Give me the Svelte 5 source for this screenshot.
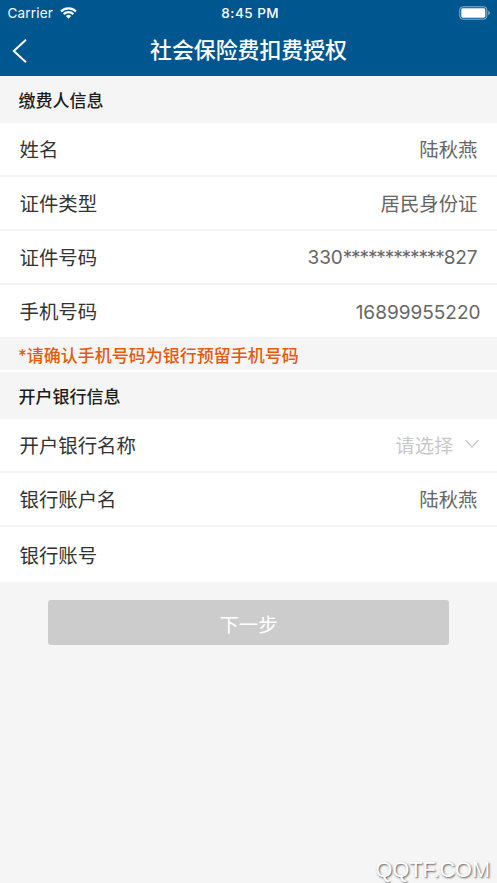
<script>
  const payer = [
    { label: '姓名', value: '陆秋燕' },
    { label: '证件类型', value: '居民身份证' },
  ];

  const idNumber = { head: '330', mask: '*'.repeat(12), tail: '827' };
</script>

<div class="screen">
  <header class="header">
    <div class="status">
      <div class="carrier">
        <span>Carrier</span>
        <svg class="wifi" viewBox="0 0 17 12" aria-hidden="true">
          <path d="M1 4.4a10.6 10.6 0 0 1 15 0" />
          <path d="M3.7 7.1a6.8 6.8 0 0 1 9.6 0" />
          <path class="wifi-dot" d="M5.9 9.1a3.7 3.7 0 0 1 5.2 0L8.5 11.8z" />
        </svg>
      </div>
      <div class="time">8:45 PM</div>
      <svg class="battery" viewBox="0 0 32 14" aria-hidden="true">
        <rect class="battery-case" x="0.8" y="0.8" width="27" height="12.4" rx="3" />
        <rect class="battery-level" x="2.3" y="2.3" width="24" height="9.4" rx="1.4" />
        <path class="battery-tip" d="M29.3 4.8v4.4q1.5-.6 1.5-2.2t-1.5-2.2z" />
      </svg>
    </div>
    <div class="nav">
      <svg class="back" viewBox="0 0 16 26" aria-hidden="true">
        <path d="M14 1.8 1.8 13 14 24.2" />
      </svg>
      <h1>社会保险费扣费授权</h1>
    </div>
  </header>

  <h2 class="section">缴费人信息</h2>
  {#each payer as { label, value }}
    <div class="row">
      <span class="label">{label}</span>
      <span class="value">{value}</span>
    </div>
  {/each}
  <div class="row">
    <span class="label">证件号码</span>
    <span class="value digits">{idNumber.head}<span class="mask">{idNumber.mask}</span>{idNumber.tail}</span>
  </div>
  <div class="row">
    <span class="label">手机号码</span>
    <span class="value digits phone">16899955220</span>
  </div>
  <p class="notice">*请确认手机号码为银行预留手机号码</p>

  <h2 class="section">开户银行信息</h2>
  <div class="row">
    <span class="label">开户银行名称</span>
    <span class="value placeholder">
      请选择
      <svg class="arrow" viewBox="0 0 14 10" aria-hidden="true">
        <path d="M.7 1.2 7 8.2l6.3-7" />
      </svg>
    </span>
  </div>
  <div class="row">
    <span class="label">银行账户名</span>
    <span class="value">陆秋燕</span>
  </div>
  <div class="row tall">
    <span class="label">银行账号</span>
  </div>

  <button class="next" disabled>下一步</button>

  <div class="watermark">QQTF.COM</div>
</div>

<style>
  :global(body) {
    margin: 0;
    background: #f5f5f5;
  }

  .screen {
    display: flex;
    flex-direction: column;
    height: 883px;
    overflow: hidden;
    font-family: Inter, 'Noto Sans CJK SC', sans-serif;
    background: #f5f5f5;
  }

  .header {
    height: 76px;
    color: #fff;
    background: #00568f;
  }

  .status {
    display: grid;
    grid-template-columns: 1fr auto 1fr;
    align-items: center;
    height: 26px;
    padding: 0 6px 0 7.5px;
  }

  .carrier {
    display: flex;
    gap: 6.5px;
    align-items: center;
    font-size: 13.5px;
    letter-spacing: 0.2px;
  }

  .wifi {
    width: 17px;
    height: 12px;
    margin-bottom: 1px;
    fill: none;
    stroke: #fff;
    stroke-width: 2.2;
  }

  .wifi-dot {
    fill: #fff;
    stroke: none;
  }

  .time {
    padding-left: 2px;
    font-size: 13.5px;
    font-weight: 500;
    letter-spacing: 0.5px;
  }

  .battery {
    justify-self: end;
    width: 32px;
    height: 14px;
    margin-bottom: 1px;
  }

  .battery-case {
    fill: none;
    stroke: #8fb6d2;
    stroke-width: 1;
  }

  .battery-level {
    fill: #fff;
  }

  .battery-tip {
    fill: #8fb6d2;
  }

  .nav {
    display: grid;
    grid-template-columns: 40px 1fr 40px;
    align-items: center;
    height: 50px;
  }

  .back {
    width: 16px;
    height: 26px;
    margin-left: 12px;
    fill: none;
    stroke: #fff;
    stroke-width: 2;
  }

  h1 {
    margin: 0;
    padding-bottom: 2px;
    font-size: 21.9px;
    font-weight: 500;
    line-height: 46px;
    text-align: center;
  }

  .section {
    flex: none;
    height: 47px;
    margin: 0;
    padding-left: 18.5px;
    color: #1c1c1c;
    font-size: 17px;
    font-weight: 500;
    line-height: 50px;
  }

  .row {
    display: flex;
    flex: none;
    align-items: center;
    justify-content: space-between;
    box-sizing: border-box;
    height: 54px;
    padding: 0 19.5px 2px 19.5px;
    font-size: 19.4px;
    background: #fff;
    border-bottom: 2px solid #f4f4f4;
  }

  .tall {
    height: 55px;
    padding-bottom: 0;
    border-bottom: 0;
  }

  .label {
    color: #333;
  }

  .value {
    color: #666;
  }

  .digits {
    padding-top: 2px;
    font-size: 19px;
    letter-spacing: -0.1px;
  }

  .mask {
    letter-spacing: -1.1px;
  }

  .phone {
    margin-right: -3px;
    padding-top: 4px;
    letter-spacing: 0;
  }

  .placeholder {
    display: flex;
    gap: 11px;
    align-items: center;
    color: #c8c8c8;
  }

  .arrow {
    width: 14px;
    height: 10px;
    margin-right: -1px;
    fill: none;
    stroke: #c8c8c8;
    stroke-width: 1.2;
  }

  .notice {
    flex: none;
    height: 31px;
    margin: 0;
    padding-left: 18px;
    color: #e8590c;
    font-size: 17px;
    font-weight: 500;
    line-height: 34px;
    border-bottom: 2px solid #fff;
  }

  .next {
    flex: none;
    height: 45px;
    margin: 18px 48px 0;
    padding: 1px 0 0;
    color: #fff;
    font: inherit;
    font-size: 19.4px;
    background: #ccc;
    border: 0;
    border-radius: 3px;
  }

  .watermark {
    margin: auto 7px 0 0;
    color: #fff;
    font-family: 'Liberation Sans', Arial, sans-serif;
    font-size: 21.7px;
    line-height: 26px;
    text-align: right;
    text-shadow: 1px 1px 2px #555;
  }
</style>
